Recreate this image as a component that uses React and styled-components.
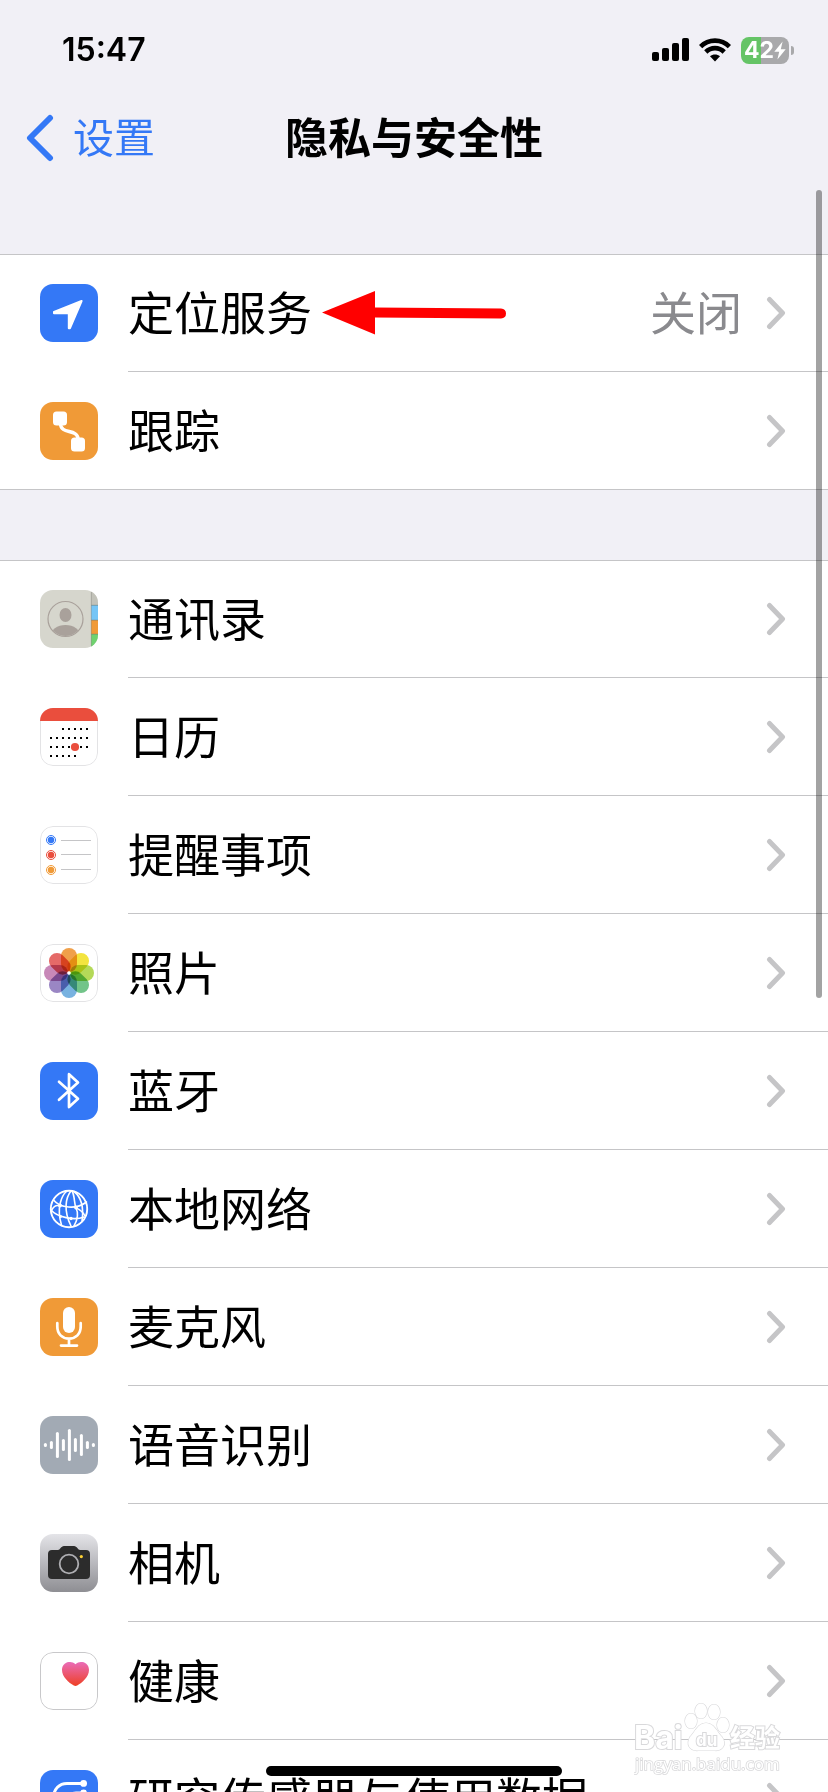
import React from "react";
import styled, { createGlobalStyle } from "styled-components";

const GlobalStyle = createGlobalStyle`
  * { box-sizing: border-box; }
  body {
    margin: 0;
    background: #f1f0f6;
    color: #000;
    font-family: Inter, "Noto Sans CJK SC", sans-serif;
  }
`;

const Screen = styled.div`
  position: relative;
  display: flex;
  flex-direction: column;
  height: 100vh;
  overflow: hidden;
  background: #f1f0f6;
`;

const StatusBar = styled.header`
  display: flex;
  flex: none;
  align-items: center;
  justify-content: space-between;
  height: 100px;
  padding: 0 34px 0 62px;
`;

const Clock = styled.time`
  font-size: 32px;
  line-height: 40px;
  font-weight: 600;
`;

const StatusIcons = styled.div`
  display: flex;
  align-items: center;
  gap: 10px;
`;

const Battery = styled.div`
  display: flex;
  align-items: center;
  gap: 2px;
`;

const BatteryBody = styled.div`
  display: flex;
  align-items: center;
  justify-content: center;
  width: 48px;
  height: 27px;
  border-radius: 8px;
  color: #fff;
  font-size: 23px;
  line-height: 27px;
  font-weight: 700;
  background: linear-gradient(to right, #65c466 ${(p) => p.$level}%, #a9a9ab ${(p) => p.$level}%);
`;

const BatteryTip = styled.span`
  width: 3px;
  height: 9px;
  border-radius: 0 4px 4px 0;
  background: #a9a9ab;
`;

const NavBar = styled.nav`
  display: grid;
  flex: none;
  grid-template-columns: 1fr auto 1fr;
  align-items: center;
  height: 76px;
  padding: 0 25px;
`;

const BackLink = styled.a`
  display: flex;
  align-items: center;
  gap: 19px;
  color: #3478f6;
  font-size: 41px;
  line-height: 48px;
  text-decoration: none;
`;

const Title = styled.h1`
  margin: 0;
  font-size: 43px;
  line-height: 48px;
  font-weight: 700;
`;

const Content = styled.main`
  flex: 1;
  min-height: 0;
  padding-top: 78px;
  overflow-y: auto;
  scrollbar-width: none;
`;

const Group = styled.ul`
  margin: 0 0 70px;
  padding: 0;
  list-style: none;
  background: #fff;
  box-shadow: inset 0 1px #c5c5c7, inset 0 -1px #c5c5c7;
`;

const Row = styled.a`
  display: flex;
  align-items: center;
  height: 118px;
  padding-left: 40px;
  gap: 30px;
  color: inherit;
  text-decoration: none;
`;

const RowBody = styled.span`
  display: flex;
  flex: 1;
  align-items: center;
  height: 100%;
  padding-right: 42px;
  font-size: 46px;
  line-height: 60px;
  white-space: nowrap;
  box-shadow: inset 0 -1px #c5c5c7;
`;

const Value = styled.span`
  color: #8a8a8e;
`;

const Trailing = styled.span`
  display: flex;
  align-items: center;
  gap: 24px;
  margin-left: auto;
`;

const IconTile = styled.svg`
  display: block;
  flex: none;
  width: 58px;
  height: 58px;
  border-radius: 13px;
  background: ${(p) => p.$fill || "#fff"};
`;

const Pointer = styled.svg`
  flex: none;
  margin-left: 10px;
`;

const ScrollThumb = styled.div`
  position: absolute;
  top: 190px;
  right: 6px;
  width: 6px;
  height: 808px;
  border-radius: 3px;
  background: rgba(0, 0, 0, 0.36);
`;

const HomeIndicator = styled.div`
  position: absolute;
  bottom: 16px;
  left: 50%;
  width: 296px;
  height: 10px;
  margin-left: -148px;
  border-radius: 5px;
  background: #000;
`;

const Watermark = styled.svg`
  position: absolute;
  right: 40px;
  bottom: 12px;
`;

const Outline = ({ color = "#e3e3e5", r = 12.5 }) => (
  <rect x="0.5" y="0.5" width="57" height="57" rx={r} fill="none" stroke={color} />
);

const line = { fill: "none", stroke: "#fff", strokeLinecap: "round", strokeLinejoin: "round" };

const LocationIcon = () => (
  <IconTile viewBox="0 0 58 58" $fill="#3478f6">
    <path d="M41.6 17 L14 28 V29.2 H28.8 V44.2 H30 Z" fill="#fff" stroke="#fff" strokeWidth="2" strokeLinejoin="round" />
  </IconTile>
);

const TrackingIcon = () => (
  <IconTile viewBox="0 0 58 58" $fill="#f09a37">
    <rect x="13" y="9.5" width="14" height="14" rx="3.5" fill="#fff" />
    <rect x="31" y="35.5" width="14" height="14" rx="3.5" fill="#fff" />
    <path d="M20.5 22 C21 33 37 26 38.2 37" {...line} strokeWidth="3.4" />
  </IconTile>
);

const ContactsIcon = () => (
  <IconTile viewBox="0 0 58 58" $fill="#d6d6cd">
    <defs>
      <clipPath id="contact-disc"><circle cx="25.5" cy="29" r="17" /></clipPath>
    </defs>
    <rect x="51" y="0" width="7" height="15" fill="#c2c2b9" />
    <rect x="51" y="15" width="7" height="15" fill="#75c5f6" />
    <rect x="51" y="30" width="7" height="14" fill="#f09a37" />
    <rect x="51" y="44" width="7" height="14" fill="#6fd26f" />
    <path d="M51 15.3H58M51 30.2H58M51 44.2H58" stroke="#6f7a70" strokeOpacity="0.55" />
    <path d="M51.3 2V56" stroke="#8d8d86" strokeOpacity="0.7" strokeWidth="0.8" />
    <circle cx="25.5" cy="29" r="17.5" fill="none" stroke="#a9a19b" strokeWidth="1.2" />
    <ellipse cx="25.5" cy="25" rx="6" ry="7" fill="#a9a19b" />
    <ellipse cx="25.5" cy="46" rx="15" ry="11" fill="#a9a19b" clipPath="url(#contact-disc)" />
  </IconTile>
);

const CALENDAR_DOTS = [
  [21, 2, 6],
  [30, 0, 6],
  [39, 0, 6],
  [48, 0, 4],
];

const CalendarIcon = () => (
  <IconTile viewBox="0 0 58 58">
    <Outline />
    <rect width="58" height="13" fill="#ea4e3d" />
    {CALENDAR_DOTS.map(([y, from, to]) =>
      Array.from({ length: to - from + 1 }, (_, i) => (
        <rect key={`${y}-${i}`} x={10 + (from + i) * 6} y={y - 1} width="2" height="2" fill="#000" />
      ))
    )}
    <circle cx="35" cy="39" r="4.1" fill="#ea4e3d" />
  </IconTile>
);

const RemindersIcon = () => (
  <IconTile viewBox="0 0 58 58">
    <Outline />
    {[["#3478f6", 14], ["#ea4e3d", 29], ["#f09a37", 44]].map(([color, y]) => (
      <g key={y}>
        <circle cx="11" cy={y} r="4.5" fill="none" stroke={color} />
        <circle cx="11" cy={y} r="3.2" fill={color} />
        <path d={`M21 ${y === 14 ? 14.5 : y - 0.5}H51`} stroke="#c5c5c7" />
      </g>
    ))}
  </IconTile>
);

const PETALS = ["#f0a04a", "#f3e43f", "#b4d958", "#72c489", "#78b2e0", "#9a86c4", "#c888b8", "#e56a68"];

const PhotosIcon = () => (
  <IconTile viewBox="0 0 58 58">
    <Outline />
    <g style={{ isolation: "isolate" }}>
      {PETALS.map((color, i) => (
        <rect
          key={color}
          x="21"
          y="4"
          width="16"
          height="24"
          rx="8"
          fill={color}
          transform={`rotate(${i * 45} 29 29)`}
          style={{ mixBlendMode: "multiply" }}
        />
      ))}
    </g>
    <circle cx="29" cy="29" r="1.8" fill="#fff" />
  </IconTile>
);

const BluetoothIcon = () => (
  <IconTile viewBox="0 0 58 58" $fill="#3478f6">
    <path d="M19 19.8 L38 36.8 L29 45 V12.2 L38 20.6 L19 37.8" {...line} strokeWidth="2.7" />
  </IconTile>
);

const NetworkIcon = () => (
  <IconTile viewBox="0 0 58 58" $fill="#3478f6">
    <g {...line} strokeWidth="1.6">
      <circle cx="29" cy="29" r="18.2" strokeWidth="1.9" />
      <path d="M27 11 C22 15 16 27 21.5 45" />
      <path d="M31 11 C26 17 23 30 31 46" />
      <path d="M32 11 C35 16 34 24 36 28 C39 34 38 39 34 46" />
      <path d="M34 11.5 C41 17 44 27 42 41" />
      <path d="M13.5 20 C20 28 36 30 46.5 22" />
      <path d="M11 30 C17 37 34 41 44 37" />
      <path d="M20 26 C15 24 13 28 11 31" />
      <path d="M36 28 C41 30 44 34 45 36" />
    </g>
    <circle cx="20" cy="25.5" r="1.9" fill="#fff" />
    <circle cx="36" cy="27.5" r="1.9" fill="#fff" />
    <circle cx="20.5" cy="36.5" r="1.6" fill="#fff" />
    <circle cx="31" cy="38.5" r="1.7" fill="#fff" />
  </IconTile>
);

const MicrophoneIcon = () => (
  <IconTile viewBox="0 0 58 58" $fill="#f09a37">
    <rect x="23" y="9" width="12" height="26" rx="6" fill="#fff" />
    <path d="M17.3 25.2 V28.5 C17.3 36 22.2 40.6 29 40.6 S40.7 36 40.7 28.5 V25.2 M29 41 V47.6 M21 47.6 H37" {...line} strokeWidth="2.7" />
  </IconTile>
);

const WAVE = [0.6, 2.6, 11.6, 4.6, 14.6, 5.6, 9.6, 2.6, 0.6];

const SpeechIcon = () => (
  <IconTile viewBox="0 0 58 58" $fill="#a2aab4">
    {WAVE.map((h, i) => (
      <path key={i} d={`M${5.4 + i * 6} ${29 - h}V${29 + h}`} {...line} strokeWidth="3" />
    ))}
  </IconTile>
);

const CameraIcon = () => (
  <IconTile viewBox="0 0 58 58" $fill="linear-gradient(#e4e4e8, #8e8e93)">
    <path
      d="M12 16 H18 C20 16 21 12 24 12 H34 C37 12 38 16 40 16 H46 Q50 16 50 20 V41 Q50 45 46 45 H12 Q8 45 8 41 V20 Q8 16 12 16 Z"
      fill="#2c2c2c"
    />
    <circle cx="29" cy="30" r="9.3" fill="#2c2c2c" stroke="#aeaeb2" strokeWidth="1.8" />
    <circle cx="41.3" cy="22.6" r="1.6" fill="#fcd034" />
  </IconTile>
);

const HealthIcon = () => (
  <IconTile viewBox="0 0 58 58">
    <defs>
      <linearGradient id="heart" x1="0" y1="0" x2="0" y2="1">
        <stop offset="0" stopColor="#ea6cb8" />
        <stop offset="1" stopColor="#ee4025" />
      </linearGradient>
    </defs>
    <Outline color="#c8c8ca" />
    <path
      d="M35.5 12.2 C37.5 10.2 40 9.7 42.3 10.1 C46.5 10.6 49 14 49 18 C49 25 42 30.8 37.2 33.5 Q35.5 34.4 33.8 33.5 C29 30.8 22 25 22 18 C22 14 24.5 10.6 28.7 10.1 C31 9.7 33.5 10.2 35.5 12.2 Z"
      fill="url(#heart)"
    />
  </IconTile>
);

const ResearchIcon = () => (
  <IconTile viewBox="0 0 58 58" $fill="#3478f6">
    <g {...line} strokeWidth="3">
      <path d="M43 13.4 H27 C19 13.4 14 19 13.5 27 C13.5 36 19 42 27 42" />
      <path d="M43 23 H36 C31 23 28 26 28 30" />
    </g>
    <circle cx="43.6" cy="13.4" r="3.4" fill="#fff" />
    <circle cx="43.6" cy="23" r="3.4" fill="#fff" />
  </IconTile>
);

const Chevron = () => (
  <svg width="20" height="34" viewBox="0 0 20 34" fill="none" stroke="#c5c5c7" strokeWidth="5" strokeLinecap="round" strokeLinejoin="round">
    <path d="M3.5 3.5 L16.5 17 L3.5 30.5" />
  </svg>
);

const RedArrow = () => (
  <Pointer width="184" height="44" viewBox="0 0 184 44" fill="#f00" aria-hidden="true">
    <path d="M0 21.5 L53 0 V16.5 L179 17.5 Q184 18 184 22.5 T179 27.5 L53 26.5 V43.5 Z" />
  </Pointer>
);

const GROUPS = [
  [
    { label: "定位服务", Icon: LocationIcon, value: "关闭", marked: true },
    { label: "跟踪", Icon: TrackingIcon },
  ],
  [
    { label: "通讯录", Icon: ContactsIcon },
    { label: "日历", Icon: CalendarIcon },
    { label: "提醒事项", Icon: RemindersIcon },
    { label: "照片", Icon: PhotosIcon },
    { label: "蓝牙", Icon: BluetoothIcon },
    { label: "本地网络", Icon: NetworkIcon },
    { label: "麦克风", Icon: MicrophoneIcon },
    { label: "语音识别", Icon: SpeechIcon },
    { label: "相机", Icon: CameraIcon },
    { label: "健康", Icon: HealthIcon },
    { label: "研究传感器与使用数据", Icon: ResearchIcon },
  ],
];

const SettingRow = ({ label, Icon, value, marked }) => (
  <li>
    <Row href="#">
      <Icon />
      <RowBody>
        <span>{label}</span>
        {marked && <RedArrow />}
        <Trailing>
          {value && <Value>{value}</Value>}
          <Chevron />
        </Trailing>
      </RowBody>
    </Row>
  </li>
);

const SignalIcon = () => (
  <svg width="37" height="24" viewBox="0 0 37 24">
    <rect x="0" y="14" width="7" height="9" rx="2" />
    <rect x="10" y="10" width="7" height="13" rx="2" />
    <rect x="20" y="5" width="7" height="18" rx="2" />
    <rect x="30" y="0" width="7" height="23" rx="2" />
  </svg>
);

const WifiIcon = () => (
  <svg width="32" height="24" viewBox="0 0 32 24">
    <g fill="none" stroke="#000" strokeWidth="4.6">
      <path d="M1.6 8.6 C9.5 0.6 22.5 0.6 30.4 8.6" />
      <path d="M6.8 14 C12 8.8 20 8.8 25.2 14" />
    </g>
    <path d="M11 18.2 C13.8 15.9 18.2 15.9 21 18.2 L16 23.4 Z" />
  </svg>
);

const BoltIcon = () => (
  <svg width="12" height="19" viewBox="0 0 12 19" fill="#fff">
    <path d="M8.6 0.5 L0.3 10.8 H5.2 L3.4 18.5 L11.7 8.2 H6.8 Z" />
  </svg>
);

const BaiduMark = () => (
  <Watermark width="154" height="80" viewBox="0 0 154 80" fill="#fff" stroke="#d9d9db" strokeWidth="2" paintOrder="stroke" aria-hidden="true">
    <text x="0" y="49" fontFamily="Inter" fontWeight="700" fontSize="32">Bai</text>
    <g strokeWidth="1.2">
      <ellipse cx="57" cy="21" rx="6" ry="7.5" />
      <ellipse cx="67" cy="11" rx="6" ry="7.5" />
      <ellipse cx="80" cy="12" rx="6" ry="7.5" />
      <ellipse cx="89" cy="25" rx="6" ry="7.5" />
      <path d="M72 23 C80 23 83 32 88 37 C93 44 89 51 81 50.5 H64 C55 51 52 44 56 37 C61 32 64 23 72 23 Z" />
    </g>
    <text x="62" y="46" fontFamily="Inter" fontWeight="700" fontSize="17">du</text>
    <text x="96" y="47" fontFamily="Noto Sans CJK SC" fontWeight="700" fontSize="25">经验</text>
    <text x="1" y="70" fontFamily="Open Sans" fontSize="17" strokeWidth="1.6">jingyan.baidu.com</text>
  </Watermark>
);

export default function App() {
  return (
    <Screen>
      <GlobalStyle />
      <StatusBar>
        <Clock>15:47</Clock>
        <StatusIcons>
          <SignalIcon />
          <WifiIcon />
          <Battery>
            <BatteryBody $level={42}>
              42
              <BoltIcon />
            </BatteryBody>
            <BatteryTip />
          </Battery>
        </StatusIcons>
      </StatusBar>
      <NavBar>
        <BackLink href="#">
          <svg width="29" height="48" viewBox="0 0 29 48" fill="none" stroke="#3478f6" strokeWidth="6" strokeLinecap="round" strokeLinejoin="round">
            <path d="M25 4 L5 24 L25 44" />
          </svg>
          设置
        </BackLink>
        <Title>隐私与安全性</Title>
      </NavBar>
      <Content>
        {GROUPS.map((rows, i) => (
          <Group key={i}>
            {rows.map((row) => (
              <SettingRow key={row.label} {...row} />
            ))}
          </Group>
        ))}
      </Content>
      <ScrollThumb />
      <BaiduMark />
      <HomeIndicator />
    </Screen>
  );
}
